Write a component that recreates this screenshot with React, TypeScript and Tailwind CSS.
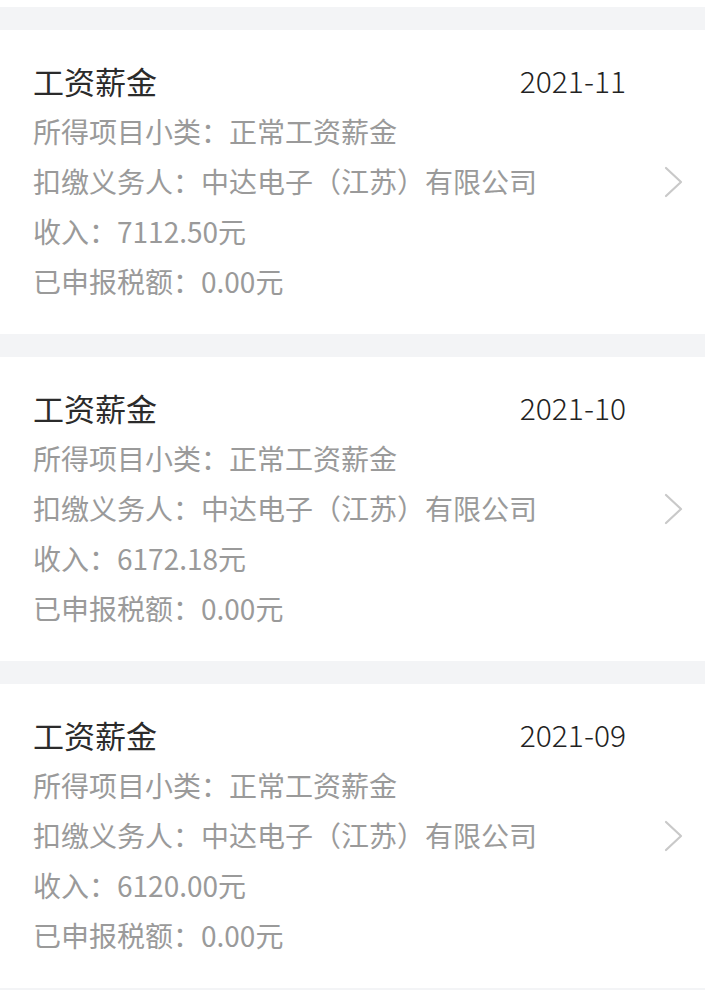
import React from "react";

const items = [
  { date: "2021-11", income: "7112.50元" },
  { date: "2021-10", income: "6172.18元" },
  { date: "2021-09", income: "6120.00元" },
];

function Chevron() {
  return (
    <svg width="20" height="32" viewBox="0 0 20 32" fill="none">
      <path d="M2 2 L17 16 L2 30" stroke="#c9c9c9" strokeWidth="2.2" strokeLinecap="round" strokeLinejoin="round" />
    </svg>
  );
}

export default function App() {
  return (
    <div
      className="w-[705px] h-[990px] bg-[#f3f4f6] overflow-hidden"
      style={{ fontFamily: '"Noto Sans CJK SC", "Noto Sans", sans-serif' }}
    >
      <div className="h-[7px] bg-white" />
      <div className="flex flex-col gap-[23px] pt-[23px]">
        {items.map((it) => (
          <div key={it.date} className="bg-white h-[304px] flex items-center pl-[33px] pr-[21px]">
            <div className="flex-1 flex flex-col pb-[4px]">
              <div className="flex justify-between items-center h-[51px] text-[31px] text-[#2b2b2b] leading-[51px]">
                <span>工资薪金</span>
                <span className="text-[30px] font-light text-[#222]">{it.date}</span>
              </div>
              <div className="text-[28px] leading-[50px] text-[#9a9a9a] flex flex-col">
                <span>所得项目小类：正常工资薪金</span>
                <span>扣缴义务人：中达电子（江苏）有限公司</span>
                <span>收入：{it.income}</span>
                <span>已申报税额：0.00元</span>
              </div>
            </div>
            <div className="ml-[38px] flex items-center">
              <Chevron />
            </div>
          </div>
        ))}
      </div>
    </div>
  );
}
